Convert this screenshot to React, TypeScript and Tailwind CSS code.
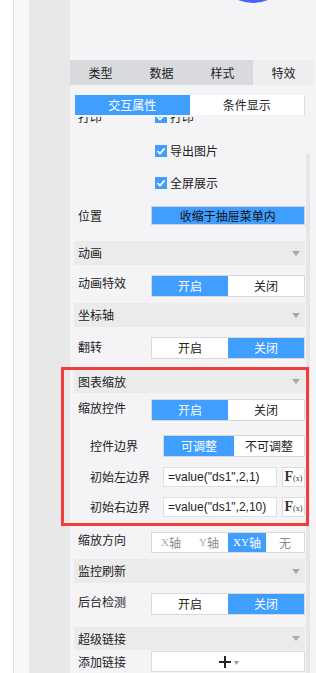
const font = { fontFamily: '"Noto Sans CJK SC", "Noto Sans", sans-serif' };

function Caret() {
  return (
    <svg width="8" height="5" viewBox="0 0 8 5">
      <polygon points="0,0 8,0 4,5" fill="#a9a9a9" />
    </svg>
  );
}

function Header({ title, className = "" }: { title: string; className?: string }) {
  return (
    <div className={`h-[24px] bg-[#ebebeb] flex items-center justify-between pl-1 pr-[5px] ${className}`}>
      <span>{title}</span>
      <Caret />
    </div>
  );
}

function Check({ label }: { label: string }) {
  return (
    <div className="flex items-center gap-[3px] ml-[4px]">
      <span className="w-[12px] h-[12px] bg-[#409eff] flex items-center justify-center">
        <svg width="10" height="10" viewBox="0 0 10 10">
          <path d="M1.5 5.2 L4 7.6 L8.6 2.4" stroke="#fff" strokeWidth="1.7" fill="none" />
        </svg>
      </span>
      <span className="leading-[14px]">{label}</span>
    </div>
  );
}

function Toggle({ options, active, width }: { options: string[]; active: number; width: string }) {
  return (
    <div className={`${width} h-[22px] border border-[#d9d9d9] bg-white flex`}>
      {options.map((o, i) => (
        <div
          key={o}
          className={`flex-1 flex items-center justify-center ${i === active ? "bg-[#409eff] text-white" : "text-[#222]"}`}
        >
          {o}
        </div>
      ))}
    </div>
  );
}

function Axis({ x, active }: { x: string; active?: boolean }) {
  return (
    <div className={`flex-1 flex items-center justify-center ${active ? "bg-[#409eff] text-white" : "text-[#8c8c8c]"}`}>
      {x && <span className={`text-[11px] ${active ? "text-white" : "text-[#b0a8c0]"}`} style={{ fontFamily: '"Liberation Serif", serif' }}>{x}</span>}
      <span>{x ? "轴" : "无"}</span>
    </div>
  );
}

function Formula({ value, className = "" }: { value: string; className?: string }) {
  return (
    <div className={`flex items-center h-[20px] ${className}`}>
      <div className="w-[16px]" />
      <div className="w-[73px]">{value === "1" ? "初始左边界" : "初始右边界"}</div>
      <div
        className="w-[114px] h-[20px] bg-white border border-[#e0e0e0] flex items-center pl-[4px] text-[#222]"
        style={{ fontFamily: '"Liberation Sans", Arial, sans-serif' }}
      >
        =value("ds1",2,{value})
      </div>
      <div className="w-[23px] h-[20px] ml-[5px] bg-white border border-[#dcdcdc] flex items-center justify-center text-[#333]" style={{ fontFamily: '"Liberation Serif", serif' }}>
        <span className="text-[14px] font-bold leading-none">F</span>
        <span className="text-[8px] leading-none mt-[3px]">(x)</span>
      </div>
    </div>
  );
}

export default function App() {
  return (
    <div className="relative w-[316px] h-[673px] overflow-hidden flex text-[12px] text-[#222]" style={font}>
      <div className="w-[13px] bg-white" />
      <div className="w-px bg-[#e3e3db]" />
      <div className="w-[15px] bg-[#f8f8f7]" />
      <div className="w-[41px] bg-[#e8e8e8]" />

      <div className="flex-1 bg-[#f4f4f6] flex flex-col">
        <div className="h-[60px] overflow-hidden">
          <div className="w-[78px] h-[78px] rounded-full bg-[#4a62f8] ml-[144px] -mt-[75px]" />
        </div>

        <div className="w-[244px] h-[25px] flex">
          {["类型", "数据", "样式", "特效"].map((t, i) => (
            <div key={t} className={`flex-1 flex items-center justify-center ${i === 3 ? "bg-[#eeeef0]" : "bg-[#d9dadd]"}`}>
              {t}
            </div>
          ))}
        </div>

        <div className="mt-[10px] ml-[5px] w-[230px] h-[20px] flex">
          <div className="flex-1 bg-[#409eff] text-white flex items-center justify-center">交互属性</div>
          <div className="flex-1 bg-white border-r border-[#dedede] flex items-center justify-center">条件显示</div>
        </div>

        <div className="mt-[2px] flex-1 overflow-hidden flex">
          <div className="ml-[4px] w-[231px] -mt-[6px] flex flex-col">
            <div className="h-[12px] flex items-center">
              <div className="w-[77px] pl-1">打印</div>
              <Check label="打印" />
            </div>
            <div className="mt-[22px] h-[12px] flex items-center">
              <div className="w-[77px]" />
              <Check label="导出图片" />
            </div>
            <div className="mt-[20px] h-[12px] flex items-center">
              <div className="w-[77px]" />
              <Check label="全屏展示" />
            </div>
            <div className="mt-[17px] h-[19px] flex items-center">
              <div className="w-[77px] pl-1">位置</div>
              <div className="w-[155px] h-[19px] bg-[#409eff] border border-[#c5d3e3] flex items-center justify-center text-[#111]">
                收缩于抽屉菜单内
              </div>
            </div>

            <Header title="动画" className="mt-[16px]" />
            <div className="mt-[10px] flex items-start">
              <div className="w-[77px] pl-1 leading-[16px]">动画特效</div>
              <Toggle options={["开启", "关闭"]} active={0} width="w-[154px]" />
            </div>

            <Header title="坐标轴" className="mt-[6px]" />
            <div className="mt-[10px] flex items-start">
              <div className="w-[77px] pl-1 leading-[20px]">翻转</div>
              <Toggle options={["开启", "关闭"]} active={1} width="w-[154px]" />
            </div>

            <Header title="图表缩放" className="mt-[11px] !h-[23px]" />
            <div className="mt-[6px] flex items-start">
              <div className="w-[77px] pl-1 leading-[18px]">缩放控件</div>
              <Toggle options={["开启", "关闭"]} active={0} width="w-[154px]" />
            </div>
            <div className="mt-[14px] flex items-center">
              <div className="w-[16px]" />
              <div className="w-[73px]">控件边界</div>
              <Toggle options={["可调整", "不可调整"]} active={0} width="w-[142px]" />
            </div>
            <Formula value="1" className="mt-[10px]" />
            <Formula value="10" className="mt-[10px]" />

            <div className="mt-[15px] flex items-start">
              <div className="w-[77px] pl-1 leading-[16px]">缩放方向</div>
              <div className="w-[154px] h-[21px] border border-[#d9d9d9] bg-white flex">
                <Axis x="X" />
                <Axis x="Y" />
                <Axis x="XY" active />
                <Axis x="" />
              </div>
            </div>

            <Header title="监控刷新" className="mt-[6px]" />
            <div className="mt-[10px] flex items-start">
              <div className="w-[77px] pl-1 leading-[18px]">后台检测</div>
              <Toggle options={["开启", "关闭"]} active={1} width="w-[154px]" />
            </div>

            <Header title="超级链接" className="mt-[12px] !h-[23px]" />
            <div className="mt-[1px] flex items-center">
              <div className="w-[77px] pl-1">添加链接</div>
              <div className="w-[154px] h-[21px] bg-white border border-[#dcdcdc] flex items-center justify-center gap-[2px]">
                <svg width="14" height="14" viewBox="0 0 14 14">
                  <path d="M7 1 V13 M1 7 H13" stroke="#222" strokeWidth="2" />
                </svg>
                <svg width="5" height="4" viewBox="0 0 5 4" className="mt-[2px]">
                  <polygon points="0,0 5,0 2.5,4" fill="#999" />
                </svg>
              </div>
            </div>
          </div>
          <div className="ml-[1px] w-[4px] mt-[36px] bg-[#e6e6e8] rounded-t-[2px]" />
        </div>
      </div>

      <div className="absolute left-[61px] top-[367px] w-[248px] h-[159px] border-[3px] border-[#f23d3d]" />
    </div>
  );
}
